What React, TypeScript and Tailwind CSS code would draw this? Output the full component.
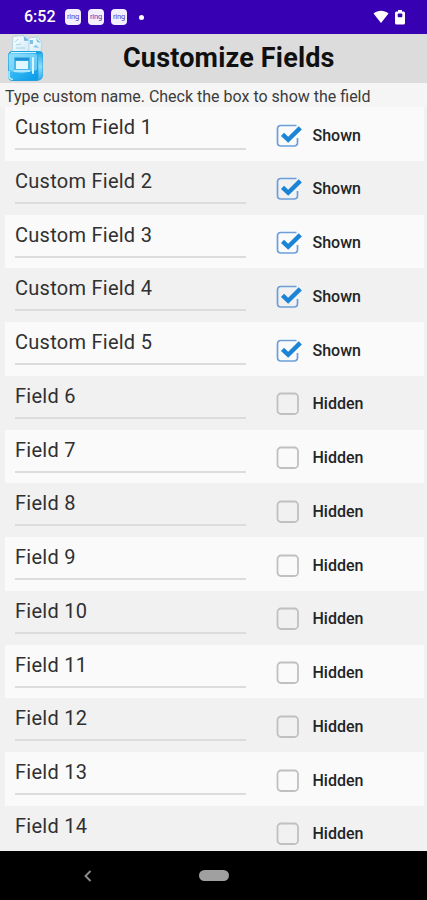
interface Field {
  name: string;
  shown: boolean;
}

const fields: Field[] = Array.from({ length: 14 }, (_, i) => ({
  name: i < 5 ? `Custom Field ${i + 1}` : `Field ${i + 1}`,
  shown: i < 5,
}));

function StatusBar() {
  return (
    <div className="flex h-[34px] shrink-0 items-center bg-[#3700b3] pl-[24px] pr-[22px] text-white">
      <span className="w-[41px] whitespace-nowrap text-[16px] font-medium leading-none">
        6:52
      </span>
      <div className="flex gap-[7px]">
        {[0, 1, 2].map((n) => (
          <div
            key={n}
            className="flex h-4 w-4 items-center justify-center rounded-[4px] bg-[#f4efff] text-[7.5px] leading-none tracking-[-0.2px] text-[#5a35b5]"
          >
            <span className="-mt-px">ring</span>
          </div>
        ))}
      </div>
      <div className="ml-[12px] h-[5px] w-[5px] rounded-full bg-white" />
      <svg className="ml-auto" width="16" height="14" viewBox="0 0 16 14">
        <path d="M0.5 3.5C5 -0.2 11 -0.2 15.5 3.5L8 13Z" fill="white" />
      </svg>
      <svg className="ml-[6px]" width="10" height="15" viewBox="0 0 10 15">
        <rect x="3" width="4" height="3" fill="white" />
        <rect y="1.5" width="10" height="13" rx="1.5" fill="white" />
        <rect x="2.7" y="3.5" width="4.6" height="3.7" rx="1" fill="#3700b3" />
      </svg>
    </div>
  );
}

// folder with two sheets of paper sticking out
function AppLogo() {
  return (
    <svg width="40" height="49" viewBox="0 0 40 49" className="shrink-0">
      <defs>
        <linearGradient id="folder" x1="0" y1="0" x2="1" y2="1">
          <stop offset="0" stopColor="#7ed6f8" />
          <stop offset="0.5" stopColor="#2fb4f2" />
          <stop offset="1" stopColor="#0799ea" />
        </linearGradient>
        <linearGradient id="side" x1="0" y1="0" x2="0" y2="1">
          <stop offset="0" stopColor="#2aaeea" />
          <stop offset="0.5" stopColor="#8fdcf6" />
          <stop offset="1" stopColor="#35aee8" />
        </linearGradient>
        <linearGradient id="paper" x1="0" y1="0" x2="1" y2="1">
          <stop offset="0" stopColor="#fbfeff" />
          <stop offset="1" stopColor="#cfeaf6" />
        </linearGradient>
      </defs>
      <path d="M23 4l8-1 5 5-1 12H22z" fill="url(#paper)" stroke="#a3d0e4" strokeWidth="0.8" />
      <path d="M24 6h3v4h-3zM30 4l1 4 4 1zM27 13l3-2 3 3" fill="#79c2e6" />
      <path d="M7 2.500L18 1.500l5 5V19H6z" fill="url(#paper)" stroke="#a9cfdf" strokeWidth="0.8" />
      <path d="M17.500 2l1 5 4-.5z" fill="#5fb4e0" />
      <path d="M9 8l3-3M10 11l5-1M10 14h9" stroke="#a5d2e8" strokeWidth="1" fill="none" />
      <path d="M7 17h26q4 0 4 4v20q0 5-6 6H7q-5 0-5-5V22q0-5 5-5z" fill="#1e9fe0" />
      <path d="M32 20l4-1q.5 1 .5 3v18q0 4-4 6z" fill="url(#side)" />
      <path d="M5 19h24q3 0 3 3v20q0 4-4 4H7q-4.500 0-4.500-4V22q0-3 2.500-3z" fill="url(#folder)" />
      <path d="M3 22v14q7 4 15 3l13-3V22q0-2-3-2H6q-3 0-3 2z" fill="#a6e6fb" opacity="0.55" />
      <path d="M3 37v5q0 3 4 3.500" fill="none" stroke="#b5effc" strokeWidth="1.5" />
      <path d="M5 18.500h25" stroke="#c9f3fe" strokeWidth="1" />
      <rect x="8" y="23" width="16" height="15" rx="1" fill="#48b8ee" />
      <rect x="9" y="24" width="14" height="2.5" fill="#1f8fd8" />
      <rect x="10" y="27" width="12" height="8" fill="#dff7fe" />
      <path d="M8 37h16" stroke="#d5f6ff" strokeWidth="1.5" />
      <rect x="26" y="23" width="2" height="17" rx="1" fill="#d8f6ff" />
    </svg>
  );
}

function Checkbox({ checked }: { checked: boolean }) {
  if (!checked) {
    return (
      <svg width="26" height="24" viewBox="0 0 26 24" className="shrink-0">
        <rect x="1.5" y="1.5" width="20.5" height="20.5" rx="3.5" fill="none" stroke="#c0c0c0" strokeWidth="1.8" />
      </svg>
    );
  }
  return (
    <svg width="26" height="24" viewBox="0 0 26 24" className="shrink-0">
      <path
        d="M20.5 1.5H5Q1.500 1.500 1.500 5v13.500Q1.500 22 5 22H18Q21.500 22 21.500 18.500V14"
        fill="none"
        stroke="#6c9edb"
        strokeWidth="1.7"
      />
      <path d="M6.500 10.300l5.700 5.500L24.300 3.900" fill="none" stroke="#1b84d6" strokeWidth="4.4" />
    </svg>
  );
}

function FieldRow({ field }: { field: Field }) {
  return (
    <div className="group ml-[5px] mr-[3px] flex h-[53.75px] shrink-0 pl-[10px] odd:bg-[#fafafa]">
      <div className="h-[43px] w-[231px] border-b-2 border-[#dcdcdc] pt-[8px] group-last:border-transparent">
        <div className="whitespace-nowrap text-[20px] leading-[24px] tracking-[0.26px] text-[#303030]">
          {field.name}
        </div>
      </div>
      <div className="ml-[30px] mt-[16px] flex h-[25px] items-center">
        <Checkbox checked={field.shown} />
        <span className="ml-[10.5px] text-[16px] font-medium text-[#222426]">
          {field.shown ? "Shown" : "Hidden"}
        </span>
      </div>
    </div>
  );
}

export default function App() {
  return (
    <div className="flex h-[900px] w-[427px] flex-col overflow-hidden bg-[#f1f1f1] font-[Roboto,sans-serif]">
      <StatusBar />
      <header className="flex h-[49px] shrink-0 items-center bg-[#dcdcdc] pl-[6px]">
        <AppLogo />
        <h1 className="ml-[77px] whitespace-nowrap text-[27px] font-bold leading-none tracking-[0.18px] text-[#101010]">
          Customize Fields
        </h1>
      </header>
      <p className="h-[24px] shrink-0 whitespace-nowrap bg-[#f5f5f5] pl-[5px] pt-[4px] text-[16px] leading-[20px] text-[#3c3c3c]">
        Type custom name. Check the box to show the field
      </p>
      <div className="flex min-h-0 flex-1 flex-col overflow-hidden">
        {fields.map((field) => (
          <FieldRow key={field.name} field={field} />
        ))}
      </div>
      {/* system navigation */}
      <nav className="flex h-[49px] shrink-0 items-center bg-black pl-[84px]">
        <svg width="8" height="12" viewBox="0 0 8 12">
          <path d="M6.500 1L1.500 6l5 5" fill="none" stroke="#8d8d8d" strokeWidth="1.9" />
        </svg>
        <div className="ml-[107px] h-[11px] w-[30px] rounded-full bg-[#a0a0a0]" />
      </nav>
    </div>
  );
}
